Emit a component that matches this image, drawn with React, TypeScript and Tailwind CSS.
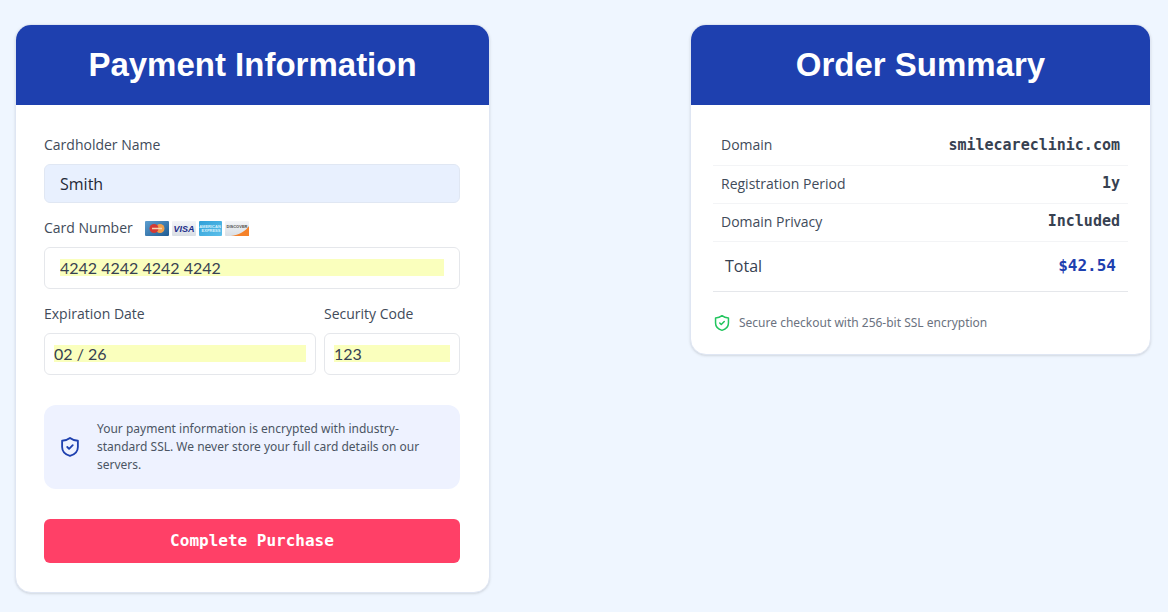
import type { ReactNode } from 'react';

interface CardProps {
  title: string;
  className: string;
  children: ReactNode;
}

function Card({ title, className, children }: CardProps) {
  return (
    <section className={`overflow-hidden rounded-2xl border border-[#dfe6f3] bg-white shadow-sm ${className}`}>
      <h2 className="bg-[#1e40af] py-5 text-center font-['Liberation_Sans',sans-serif] text-[33px] leading-10 font-bold text-white">
        {title}
      </h2>
      {children}
    </section>
  );
}

function ShieldIcon({ className }: { className: string }) {
  return (
    <svg viewBox="0 0 24 24" fill="none" stroke="currentColor" strokeWidth="2" strokeLinecap="round" strokeLinejoin="round" className={className} aria-hidden="true">
      <path d="M12 2.2C9.5 4.2 6.5 5 3.4 5.2V12c0 5 3.6 8.3 8.6 9.8 5-1.5 8.6-4.8 8.6-9.8V5.2C17.5 5 14.5 4.2 12 2.2Z" />
      <path d="m9 12 2 2 4-4" />
    </svg>
  );
}

function CardBrands() {
  return (
    <svg width="105" height="16" viewBox="0 0 105 16" aria-hidden="true">
      <defs>
        <linearGradient id="mc" x1="0" y1="0" x2="1" y2="1">
          <stop offset="0" stopColor="#5d9ed0" />
          <stop offset="1" stopColor="#1f5c93" />
        </linearGradient>
        <linearGradient id="silver" x1="0" y1="0" x2="0" y2="1">
          <stop offset="0" stopColor="#f3f5f8" />
          <stop offset="1" stopColor="#d9dee4" />
        </linearGradient>
        <linearGradient id="amex" x1="0" y1="0" x2="1" y2="1">
          <stop offset="0" stopColor="#2f9fd8" />
          <stop offset="1" stopColor="#5cc0ea" />
        </linearGradient>
      </defs>
      <rect x="0" y="1" width="24" height="15" rx="1" fill="url(#mc)" />
      <circle cx="15" cy="8.5" r="4.5" fill="#f0a04b" />
      <circle cx="9" cy="8.5" r="4.5" fill="#d33a35" />
      <path d="M7 8.5h10" stroke="#f6d3b0" strokeWidth="1.5" />
      <rect x="27" y="1" width="24" height="15" rx="1" fill="url(#silver)" />
      <text x="39" y="12" textAnchor="middle" fontFamily="Liberation Sans, sans-serif" fontSize="9" fontWeight="bold" fontStyle="italic" fill="#1c2d8a">VISA</text>
      <rect x="54" y="1" width="23" height="15" rx="1" fill="url(#amex)" />
      <text x="65" y="8" textAnchor="middle" fontFamily="Liberation Sans, sans-serif" fontSize="4" fontWeight="bold" fill="#d8f1fc">AMERICAN</text>
      <text x="66" y="12" textAnchor="middle" fontFamily="Liberation Sans, sans-serif" fontSize="4" fontWeight="bold" fill="#d8f1fc">EXPRESS</text>
      <rect x="80" y="1" width="24" height="15" rx="1" fill="url(#silver)" />
      <path d="M104 6v10H86c8-1 15-5 18-10z" fill="#f5822a" />
      <text x="92" y="8" textAnchor="middle" fontFamily="Liberation Sans, sans-serif" fontSize="4" fontWeight="bold" fill="#4b4b4b">DISCOVER</text>
    </svg>
  );
}

const labelClass = "flex items-center font-['Open_Sans',sans-serif] text-[14px] leading-5 text-[#414b5a]";
const boxClass = 'rounded-md border border-gray-200 pt-[11px] pb-3';
const filledClass = "block h-[17px] w-full bg-[#faffbd] font-['Lato',sans-serif] text-base leading-[17px] text-[#374151] outline-none";

const items = [
  { name: 'Domain', value: 'smilecareclinic.com' },
  { name: 'Registration Period', value: '1y' },
  { name: 'Domain Privacy', value: 'Included' },
];

export default function App() {
  return (
    <main className="flex min-h-screen items-start justify-between gap-6 bg-[#eff6ff] pt-6 pr-[17px] pb-[18px] pl-[15px]">
      <Card title="Payment Information" className="w-full max-w-[475px]">
        <form className="pt-[30px] pr-[29px] pb-[29px] pl-7" onSubmit={(e) => e.preventDefault()}>
          <div className="flex flex-col gap-[15px]">
            <div className="flex flex-col gap-[9px]">
              <label htmlFor="name" className={labelClass}>Cardholder Name</label>
              <input
                id="name"
                defaultValue="Smith"
                className="h-[39px] w-full rounded-md border border-[#e0e7f3] bg-[#e8f0fe] px-[15px] font-['Open_Sans',sans-serif] text-base text-[#1f2937] outline-none"
              />
            </div>
            <div className="flex flex-col gap-[9px]">
              <label htmlFor="number" className={`${labelClass} gap-3`}>
                Card Number
                <CardBrands />
              </label>
              <div className={`${boxClass} px-[15px]`}>
                <input id="number" defaultValue="4242 4242 4242 4242" className={filledClass} />
              </div>
            </div>
            <div className="grid grid-cols-[2fr_1fr] gap-2">
              <div className="flex flex-col gap-[9px]">
                <label htmlFor="expiry" className={labelClass}>Expiration Date</label>
                <div className={`${boxClass} px-[9px]`}>
                  <input id="expiry" defaultValue="02 / 26" className={filledClass} />
                </div>
              </div>
              <div className="flex flex-col gap-[9px]">
                <label htmlFor="code" className={labelClass}>Security Code</label>
                <div className={`${boxClass} px-[9px]`}>
                  <input id="code" defaultValue="123" className={filledClass} />
                </div>
              </div>
            </div>
          </div>

          <div className="mt-[30px] flex items-center gap-4 rounded-xl bg-[#eef2ff] py-[15px] pr-4 pl-[15px]">
            <ShieldIcon className="size-[22px] shrink-0 text-[#1e40af]" />
            <p className="font-['Noto_Sans',sans-serif] text-[12px] leading-[18px] text-[#4b5563]">
              Your payment information is encrypted with industry-standard SSL. We never store your full card details on our servers.
            </p>
          </div>

          <button type="submit" className="mt-[30px] h-11 w-full rounded-md bg-[#ff4067] font-['DejaVu_Sans_Mono',monospace] text-base font-bold text-white">
            Complete Purchase
          </button>
        </form>
      </Card>

      <Card title="Order Summary" className="w-full max-w-[461px]">
        <div className="px-[22px] py-[22px]">
          <table className="w-full border-collapse">
            <tbody>
              {items.map((item) => (
                <tr key={item.name} className="h-[38px] border-b border-gray-100">
                  <th scope="row" className="px-2 pb-0.5 text-left font-['Open_Sans',sans-serif] text-[14px] font-normal text-[#414b5a]">{item.name}</th>
                  <td className="px-2 pb-0.5 text-right font-['DejaVu_Sans_Mono',monospace] text-[15px] font-bold text-[#374151]">{item.value}</td>
                </tr>
              ))}
              <tr className="h-[50px] border-b border-gray-200">
                <th scope="row" className="px-3 text-left font-['Open_Sans',sans-serif] text-base font-medium text-[#374151]">Total</th>
                <td className="px-3 text-right font-['DejaVu_Sans_Mono',monospace] text-base font-bold text-[#1e40af]">$42.54</td>
              </tr>
            </tbody>
          </table>
          <p className="mt-[22px] flex items-center gap-2 font-['Noto_Sans',sans-serif] text-[12px] leading-[18px] text-[#6b7280]">
            <ShieldIcon className="size-[18px] shrink-0 text-[#22c55e]" />
            Secure checkout with 256-bit SSL encryption
          </p>
        </div>
      </Card>
    </main>
  );
}
